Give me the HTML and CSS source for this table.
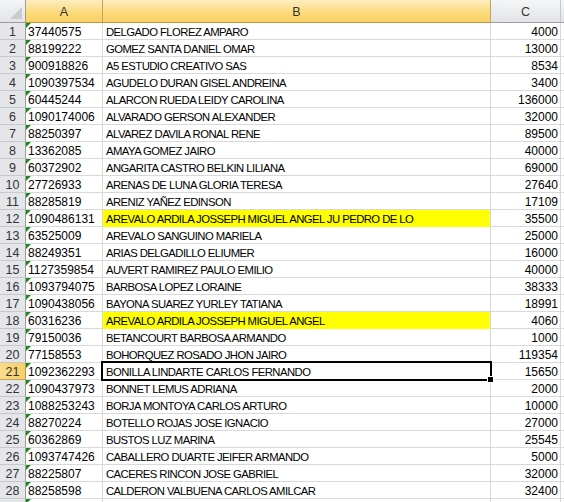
FILE: index.html
```
<!DOCTYPE html>
<html>
<head>
<meta charset="utf-8">
<link rel="stylesheet" href="styles.css">
</head>
<body>
<div class="sheet">
  <div class="corner"><span class="corner-tri"></span></div>
  <div class="ch sel">A</div>
  <div class="ch sel">B</div>
  <div class="ch">C</div>
  <div class="ch blank"></div>

  <div class="rh">1</div><div class="cell a">37440575</div><div class="cell b">DELGADO FLOREZ AMPARO</div><div class="cell n">4000</div><div class="cell d"></div>
  <div class="rh">2</div><div class="cell a">88199222</div><div class="cell b">GOMEZ SANTA DANIEL OMAR</div><div class="cell n">13000</div><div class="cell d"></div>
  <div class="rh">3</div><div class="cell a">900918826</div><div class="cell b">A5 ESTUDIO CREATIVO SAS</div><div class="cell n">8534</div><div class="cell d"></div>
  <div class="rh">4</div><div class="cell a">1090397534</div><div class="cell b">AGUDELO DURAN GISEL ANDREINA</div><div class="cell n">3400</div><div class="cell d"></div>
  <div class="rh">5</div><div class="cell a">60445244</div><div class="cell b">ALARCON RUEDA LEIDY CAROLINA</div><div class="cell n">136000</div><div class="cell d"></div>
  <div class="rh">6</div><div class="cell a">1090174006</div><div class="cell b">ALVARADO GERSON ALEXANDER</div><div class="cell n">32000</div><div class="cell d"></div>
  <div class="rh">7</div><div class="cell a">88250397</div><div class="cell b">ALVAREZ DAVILA RONAL RENE</div><div class="cell n">89500</div><div class="cell d"></div>
  <div class="rh">8</div><div class="cell a">13362085</div><div class="cell b">AMAYA GOMEZ JAIRO</div><div class="cell n">40000</div><div class="cell d"></div>
  <div class="rh">9</div><div class="cell a">60372902</div><div class="cell b">ANGARITA CASTRO BELKIN LILIANA</div><div class="cell n">69000</div><div class="cell d"></div>
  <div class="rh">10</div><div class="cell a">27726933</div><div class="cell b">ARENAS DE LUNA GLORIA TERESA</div><div class="cell n">27640</div><div class="cell d"></div>
  <div class="rh">11</div><div class="cell a">88285819</div><div class="cell b">ARENIZ YAÑEZ EDINSON</div><div class="cell n">17109</div><div class="cell d"></div>
  <div class="rh">12</div><div class="cell a">1090486131</div><div class="cell b yl">AREVALO ARDILA JOSSEPH MIGUEL ANGEL JU PEDRO DE LO</div><div class="cell n">35500</div><div class="cell d"></div>
  <div class="rh">13</div><div class="cell a">63525009</div><div class="cell b">AREVALO SANGUINO MARIELA</div><div class="cell n">25000</div><div class="cell d"></div>
  <div class="rh">14</div><div class="cell a">88249351</div><div class="cell b">ARIAS DELGADILLO ELIUMER</div><div class="cell n">16000</div><div class="cell d"></div>
  <div class="rh">15</div><div class="cell a">1127359854</div><div class="cell b">AUVERT RAMIREZ PAULO EMILIO</div><div class="cell n">40000</div><div class="cell d"></div>
  <div class="rh">16</div><div class="cell a">1093794075</div><div class="cell b">BARBOSA LOPEZ LORAINE</div><div class="cell n">38333</div><div class="cell d"></div>
  <div class="rh">17</div><div class="cell a">1090438056</div><div class="cell b">BAYONA SUAREZ YURLEY TATIANA</div><div class="cell n">18991</div><div class="cell d"></div>
  <div class="rh">18</div><div class="cell a">60316236</div><div class="cell b yl">AREVALO ARDILA JOSSEPH MIGUEL ANGEL</div><div class="cell n">4060</div><div class="cell d"></div>
  <div class="rh">19</div><div class="cell a">79150036</div><div class="cell b">BETANCOURT BARBOSA ARMANDO</div><div class="cell n">1000</div><div class="cell d"></div>
  <div class="rh">20</div><div class="cell a">77158553</div><div class="cell b">BOHORQUEZ ROSADO JHON JAIRO</div><div class="cell n">119354</div><div class="cell d"></div>
  <div class="rh sel">21</div><div class="cell a">1092362293</div><div class="cell b active">BONILLA LINDARTE CARLOS FERNANDO<span class="sel-box"><span class="handle"></span></span></div><div class="cell n">15650</div><div class="cell d"></div>
  <div class="rh">22</div><div class="cell a">1090437973</div><div class="cell b">BONNET LEMUS ADRIANA</div><div class="cell n">2000</div><div class="cell d"></div>
  <div class="rh">23</div><div class="cell a">1088253243</div><div class="cell b">BORJA MONTOYA CARLOS ARTURO</div><div class="cell n">10000</div><div class="cell d"></div>
  <div class="rh">24</div><div class="cell a">88270224</div><div class="cell b">BOTELLO ROJAS JOSE IGNACIO</div><div class="cell n">27000</div><div class="cell d"></div>
  <div class="rh">25</div><div class="cell a">60362869</div><div class="cell b">BUSTOS LUZ MARINA</div><div class="cell n">25545</div><div class="cell d"></div>
  <div class="rh">26</div><div class="cell a">1093747426</div><div class="cell b">CABALLERO DUARTE JEIFER ARMANDO</div><div class="cell n">5000</div><div class="cell d"></div>
  <div class="rh">27</div><div class="cell a">88225807</div><div class="cell b">CACERES RINCON JOSE GABRIEL</div><div class="cell n">32000</div><div class="cell d"></div>
  <div class="rh">28</div><div class="cell a">88258598</div><div class="cell b">CALDERON VALBUENA CARLOS AMILCAR</div><div class="cell n">32400</div><div class="cell d"></div>
  <div class="rh"></div><div class="cell a"></div><div class="cell b"></div><div class="cell n"></div><div class="cell d"></div>
</div>
</body>
</html>
```

FILE: styles.css
```
html, body {
  margin: 0;
  padding: 0;
  background: #ffffff;
  overflow: hidden;
}

.sheet {
  display: grid;
  grid-template-columns: 26px 77px 388px 70px 1fr;
  grid-template-rows: 23px;
  grid-auto-rows: 17px;
  width: 564px;
  height: 502px;
  overflow: hidden;
  font-family: "Liberation Sans", Arial, sans-serif;
  font-size: 12px;
  color: #000000;
}

.sheet > div {
  box-sizing: border-box;
  white-space: nowrap;
  overflow: hidden;
}

.corner {
  position: relative;
  background: linear-gradient(#f4f5f7, #e2e4e7);
  border-right: 1px solid #9c9c9c;
  border-bottom: 1px solid #9c9c9c;
}

.corner-tri {
  position: absolute;
  right: 3px;
  bottom: 3px;
  width: 12px;
  height: 12px;
  background: #c9cbce;
  clip-path: polygon(100% 0, 100% 100%, 0 100%);
}

.ch {
  background: linear-gradient(#f5f6f8, #e1e3e6);
  border-right: 1px solid #c6c8cb;
  border-bottom: 1px solid #9c9c9c;
  text-align: center;
  line-height: 22px;
  padding-top: 1px;
  color: #333333;
  font-size: 12.5px;
}

.ch.sel {
  background: linear-gradient(#fdeec0, #fbd978 60%, #f9d166);
  border-right-color: #c6a160;
  border-bottom-color: #c1913d;
}

.ch.blank {
  border-right: none;
}

.rh {
  background: #e4e6e9;
  border-right: 1px solid #9c9c9c;
  border-bottom: 1px solid #c6c8cb;
  text-align: center;
  line-height: 16px;
  padding-top: 1px;
  color: #333333;
  font-size: 12.5px;
}

.rh.sel {
  background: linear-gradient(90deg, #fbdc8a, #f8cf67);
  border-right-color: #c1913d;
  border-bottom-color: #c6a160;
}

.cell {
  border-right: 1px solid #d9d9d9;
  border-bottom: 1px solid #d9d9d9;
  line-height: 16px;
  padding-top: 1px;
}

.a {
  position: relative;
  padding-left: 2px;
}

.a::before {
  content: "";
  position: absolute;
  left: 0;
  top: 0;
  width: 0;
  height: 0;
  border-top: 5px solid #178b1e;
  border-right: 5px solid transparent;
}

.b {
  padding-left: 3px;
  overflow: visible !important;
  font-size: 11.3px;
  letter-spacing: -0.55px;
}

.b.yl {
  background: #ffff00;
  border-bottom-color: #ffff00;
}

.n {
  text-align: right;
  padding-right: 2px;
}

.d {
  border-right: none !important;
}

.active {
  position: relative;
}

.sel-box {
  position: absolute;
  left: -2px;
  top: -2px;
  right: -2px;
  bottom: -2px;
  border: 2px solid #000000;
  z-index: 2;
}

.handle {
  position: absolute;
  right: -4px;
  bottom: -4px;
  width: 5px;
  height: 5px;
  background: #000000;
  border: 1px solid #ffffff;
}
```
